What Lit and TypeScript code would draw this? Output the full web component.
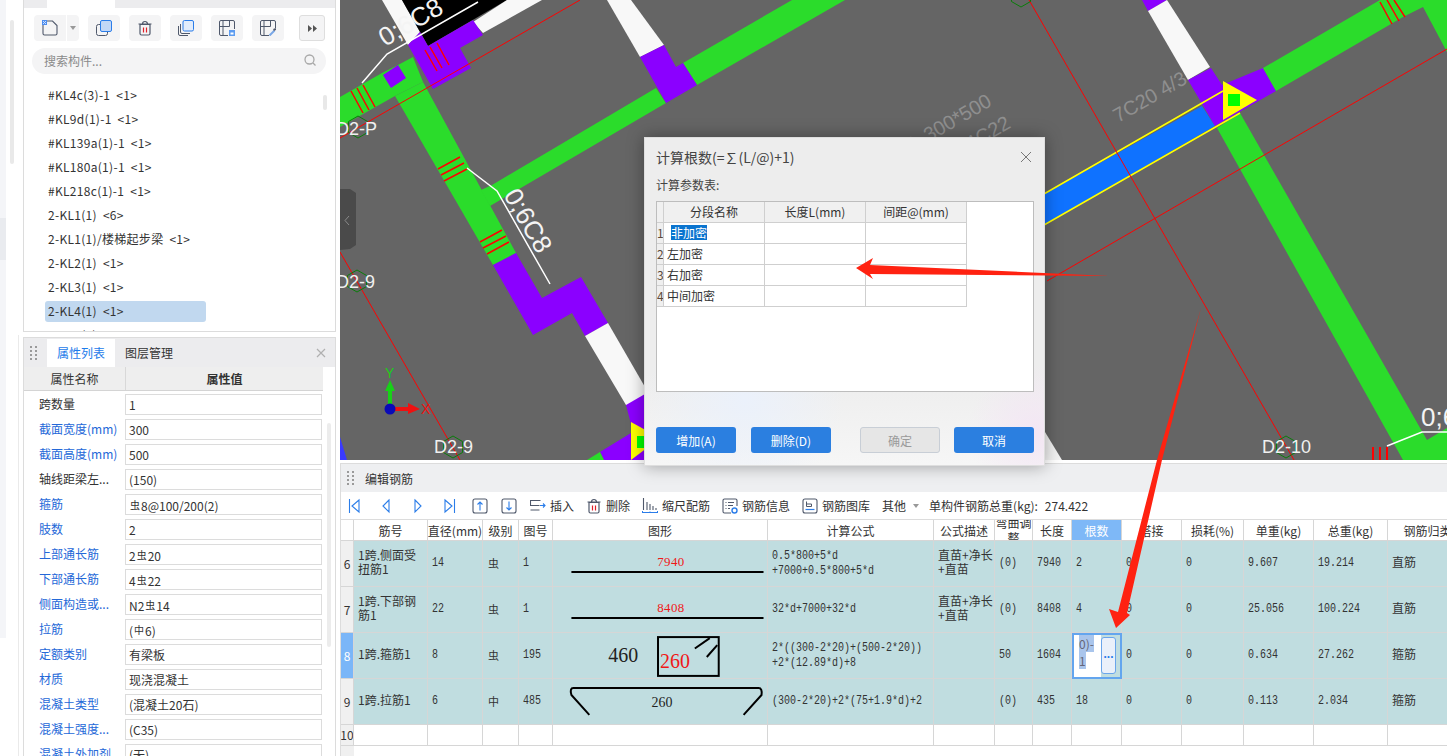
import { LitElement, css, html } from "lit";
import { customElement } from "lit/decorators.js";

const listItems = [
  "#KL4c(3)-1  <1>",
  "#KL9d(1)-1  <1>",
  "#KL139a(1)-1  <1>",
  "#KL180a(1)-1  <1>",
  "#KL218c(1)-1  <1>",
  "2-KL1(1)  <6>",
  "2-KL1(1)/楼梯起步梁  <1>",
  "2-KL2(1)  <1>",
  "2-KL3(1)  <1>",
  "2-KL4(1)  <1>",
  "2-KL5(1)  <1>",
];

// blue = label shown as a public attribute
const props: [string, string, boolean][] = [
  ["跨数量", "1", false],
  ["截面宽度(mm)", "300", true],
  ["截面高度(mm)", "500", true],
  ["轴线距梁左...", "(150)", false],
  ["箍筋", "虫8@100/200(2)", true],
  ["肢数", "2", true],
  ["上部通长筋", "2虫20", true],
  ["下部通长筋", "4虫22", true],
  ["侧面构造或...", "N2虫14", true],
  ["拉筋", "(中6)", true],
  ["定额类别", "有梁板", true],
  ["材质", "现浇混凝土", true],
  ["混凝土类型", "(混凝土20石)", true],
  ["混凝土强度...", "(C35)", true],
  ["混凝土外加剂", "(无)", true],
];

const headers = ["", "筋号", "直径(mm)", "级别", "图号", "图形", "计算公式", "公式描述", "弯曲调整", "长度", "根数", "搭接", "损耗(%)", "单重(kg)", "总重(kg)", "钢筋归类"];

const rows = [
  { no: "6", name: "1跨.侧面受扭筋1", d: "14", grade: "虫", shape: "line7940", formula: ["0.5*800+5*d", "+7000+0.5*800+5*d"], desc: "直苗+净长+直苗", bend: "(0)", len: "7940", count: "2", unit: "9.607", total: "19.214", kind: "直筋", code: "1" },
  { no: "7", name: "1跨.下部钢筋1", d: "22", grade: "虫", shape: "line8408", formula: ["32*d+7000+32*d"], desc: "直苗+净长+直苗", bend: "(0)", len: "8408", count: "4", unit: "25.056", total: "100.224", kind: "直筋", code: "1" },
  { no: "8", name: "1跨.箍筋1", d: "8", grade: "虫", shape: "stirrup", formula: ["2*((300-2*20)+(500-2*20))", "+2*(12.89*d)+8"], desc: "", bend: "50", len: "1604", count: "", unit: "0.634", total: "27.262", kind: "箍筋", code: "195" },
  { no: "9", name: "1跨.拉筋1", d: "6", grade: "中", shape: "tie", formula: ["(300-2*20)+2*(75+1.9*d)+2"], desc: "", bend: "(0)", len: "435", count: "18", unit: "0.113", total: "2.034", kind: "箍筋", code: "485" },
];

const hex = (cx: number, cy: number, r = 11) =>
  [0, 60, 120, 180, 240, 300]
    .map((a) => {
      const t = ((a + 90) * Math.PI) / 180;
      return `${cx + r * Math.cos(t)},${cy + r * Math.sin(t)}`;
    })
    .join(" ");

// the rebar grade symbols sit smaller and higher than the digits around them
const withGrade = (v: string) =>
  v.split(/([虫中](?=\d))/).map((part) =>
    part === "虫" || part === "中" ? html`<span class="sym">${part}</span>` : part
  );

const mono = (v: string) => html`<span class="mono">${v}</span>`;

const dots = html`<svg class="dots" width="7" height="14" viewBox="0 0 7 14">
  <g fill="#9a9a9a"><rect x="0" y="0" width="2" height="2"/><rect x="5" y="0" width="2" height="2"/><rect x="0" y="4" width="2" height="2"/><rect x="5" y="4" width="2" height="2"/><rect x="0" y="8" width="2" height="2"/><rect x="5" y="8" width="2" height="2"/><rect x="0" y="12" width="2" height="2"/><rect x="5" y="12" width="2" height="2"/></g>
</svg>`;

const trash = html`<svg width="16" height="16" viewBox="0 0 16 16" fill="none">
  <path d="M3 4.500h10v9a1.500 1.500 0 0 1-1.500 1.500h-7A1.500 1.500 0 0 1 3 13.500z M1.500 4h13 M5.500 4a2.500 2.500 0 0 1 5 0" stroke="#4f586b" stroke-width="1.200"/>
  <path d="M6.500 7.500v5 M9.500 7.500v5" stroke="#e0202a" stroke-width="1.200"/>
</svg>`;

const nav = (d: string) => html`<span class="nav"><svg width="12" height="16" viewBox="0 0 12 16" fill="none" stroke="#2b7de9" stroke-width="1.100"><path d=${d}/></svg></span>`;

const boxArrow = (d: string) => html`<span class="box"><svg width="16" height="16" viewBox="0 0 16 16" fill="none">
  <rect x="1" y="1" width="14" height="14" rx="2" stroke="#4f586b" stroke-width="1.100"/>
  <path d=${d} stroke="#2b7de9" stroke-width="1.100"/>
</svg></span>`;

const insertIcon = html`<svg width="16" height="16" viewBox="0 0 16 16" fill="none">
  <path d="M10.500 2.500h-10v5h9 M.5 12h9" stroke="#4f586b" stroke-width="1.100"/>
  <path d="M10 7.500h5 M13 5.500l2 2-2 2" stroke="#2b7de9" stroke-width="1.100"/>
</svg>`;

const chartIcon = html`<svg width="16" height="16" viewBox="0 0 16 16" fill="none">
  <path d="M1.500 0v12 M5 4v8 M8 6v6 M11 8v4 M14 10v2" stroke="#4f586b" stroke-width="1.100"/>
  <path d="M.5 13v2 M.5 14.500h15 M15.500 13v2 M8 13.500v1" stroke="#2b7de9" stroke-width="1"/>
</svg>`;

const infoIcon = html`<svg width="16" height="16" viewBox="0 0 16 16" fill="none">
  <path d="M15 8V2.500A1.500 1.500 0 0 0 13.500 1h-11A1.500 1.500 0 0 0 1 2.500v11A1.500 1.500 0 0 0 2.500 15H9" stroke="#4f586b" stroke-width="1.100"/>
  <path d="M3.500 4.500h1 M6 4.500h6 M3.500 7.500h1 M6 7.500h5 M3.500 10.500h1 M6 10.500h2" stroke="#4f586b" stroke-width="1"/>
  <circle cx="12.500" cy="12.500" r="2.500" stroke="#2b7de9" stroke-width="1.400"/>
</svg>`;

const libIcon = html`<svg width="16" height="16" viewBox="0 0 16 16" fill="none">
  <rect x="1" y="1" width="14" height="14" rx="2" stroke="#4f586b" stroke-width="1.100"/>
  <path d="M4.500 3.500v5h5v-2.500h-5" stroke="#4f586b" stroke-width="1"/>
  <path d="M3.500 11.500h9" stroke="#2b7de9" stroke-width="1.200"/>
</svg>`;

const shapes: Record<string, unknown> = {
  line7940: html`<svg width="215" height="45" viewBox="552.500 541 215 45">
    <text x="671" y="566" text-anchor="middle" class="fig-red">7940</text>
    <path d="M571 572h193" stroke="#000" stroke-width="2"/>
  </svg>`,
  line8408: html`<svg width="215" height="45" viewBox="552.500 587 215 45">
    <text x="671" y="612" text-anchor="middle" class="fig-red">8408</text>
    <path d="M571 618h193" stroke="#000" stroke-width="2"/>
  </svg>`,
  stirrup: html`<svg width="215" height="45" viewBox="552.500 633 215 45">
    <text x="623" y="662" text-anchor="middle" class="fig-big">460</text>
    <rect x="658" y="637" width="61" height="39" fill="none" stroke="#000" stroke-width="2"/>
    <path d="M695 648.500l15-10.500 M707 657l10.500-12" stroke="#000" stroke-width="2"/>
    <text x="675" y="668" text-anchor="middle" class="fig-big red">260</text>
  </svg>`,
  tie: html`<svg width="215" height="45" viewBox="552.500 679 215 45">
    <path d="M589 715l-18-20q-2-7 2-7h186q4 0 3 7l-18 20" fill="none" stroke="#000" stroke-width="2"/>
    <text x="662" y="707" text-anchor="middle" class="fig-mid">260</text>
  </svg>`,
};

@customElement("app-root")
export class AppRoot extends LitElement {
  renderCanvas() {
    return html`<svg class="canvas" width="1107" height="460" viewBox="340 0 1107 460">
      <rect x="340" y="0" width="1107" height="460" fill="#656565"/>

      <!-- top left junction -->
      <polygon fill="#f8f8f8" points="382,0 402,0 420,32 408,45"/>
      <polygon fill="#000" points="402,0 507,0 428,46"/>
      <polygon fill="#f8f8f8" points="473,22 507,0 542,0 483,33"/>
      <polygon fill="#8b00ff" points="408,45 420,32 428,46 473,20 483,35 460,48 471,68 433,89"/>
      <polygon fill="#2bdc2b" points="340,97 382,73 398,65 413,57 423,82 395,96 340,127"/>
      <polygon fill="#2bdc2b" points="395,96 423,82 516,253 493,265"/>
      <polygon fill="#8b00ff" points="383,75 398,65 406,78 391,88"/>
      <path d="M351 91l12 22 M357 88l12 22 M363 85l12 22 M425 50l12 21 M430 47l12 21 M437 43l12 22" stroke="#ff0000" stroke-width="1.500"/>

      <!-- branch toward the top -->
      <polygon fill="#2bdc2b" points="481,190 492,185 656,88 666,103 490,206"/>
      <polygon fill="#2bdc2b" points="683,63 792,0 845,0 697,85"/>
      <polygon fill="#f8f8f8" points="607,0 631,0 664,45 640,57"/>
      <polygon fill="#8b00ff" points="640,57 664,45 676,67 683,63 697,85 666,103"/>
      <path d="M438 169l22-12 M441 175l23-12 M444 181l23-12 M480 242l22-12 M483 248l23-12 M487 254l22-12" stroke="#ff0000" stroke-width="1.500"/>

      <!-- beam running down to the dialog -->
      <polygon fill="#8b00ff" points="493,265 516,253 542,298 581,277 608,323 585,336 572,313 533,335"/>
      <polygon fill="#f8f8f8" points="585,336 608,323 660,413 626,405"/>
      <polygon fill="#8b00ff" points="626,405 645,394 660,440 631,424"/>
      <polygon fill="#8b00ff" points="600,452 631,433 660,433 660,460 604,460"/>
      <polygon fill="#2bdc2b" points="587,460 600,452 604,460"/>
      <polygon fill="#ffff00" points="631,422 660,438 631,460"/>
      <rect x="637" y="436" width="12" height="12" fill="#00ff00"/>
      <polygon fill="#3a3aff" points="340,437 347,460 340,460"/>

      <!-- right side -->
      <polygon fill="#0f72ff" points="1030,202 1202,106 1215,126 1030,233"/>
      <polygon fill="#8b00ff" points="1142,0 1148,11 1167,0"/>
      <polygon fill="#f8f8f8" points="1148,11 1167,0 1210,67 1188,80"/>
      <polygon fill="#2bdc2b" points="1217,128 1240,113 1427,440 1447,428 1447,460 1403,460"/>
      <polygon fill="#8b00ff" points="1188,80 1211,68 1222,85 1263,68 1276,91 1215,126"/>
      <polygon fill="#2bdc2b" points="1263,68 1380,0 1447,0 1447,52 1423,7 1403,17 1276,91"/>
      <path d="M1030 202L1223 91 M1030 233L1240 113" stroke="#ffff00" stroke-width="1.500"/>
      <path d="M1380 2l12 22 M1387 0l12 21 M1394 0l11 17" stroke="#ff0000" stroke-width="1.500"/>
      <polygon fill="#ffff00" points="1223,81 1257,100 1223,120"/>
      <rect x="1228" y="94" width="12" height="12" fill="#00ff00"/>
      <path d="M1373 447v13 M1380 447v13 M1387 447v13" stroke="#ff0000" stroke-width="2"/>
      <polygon fill="#f2f2f2" points="1045,432 1062,460 1045,460"/>

      <!-- axis lines -->
      <path d="M340 138L580 0 M340 252L460 460 M1029 0L1294 460 M1447 49L1047 281" stroke="#ff0000" stroke-width="1" fill="none"/>

      <!-- leaders and labels -->
      <path d="M362 83l25-29 L478 2 M467 168l30 23 L550 284 M1387 446l35-14h25" stroke="#fff" stroke-width="1.500" fill="none"/>
      <text class="rebar" transform="translate(385 47) rotate(-30)">0;6C8</text>
      <text class="rebar" transform="translate(503 195) rotate(60)">0;6C8</text>
      <text class="rebar" x="1421" y="426">0;6C8</text>
      <text class="note" transform="translate(1118 123) rotate(-30)">7C20 4/3</text>
      <text class="note" text-anchor="end" transform="translate(993 105) rotate(-30)">L 300*500</text>
      <text class="note" text-anchor="end" transform="translate(1012 127) rotate(-30)">4C22</text>

      <g fill="none" stroke="#0a7d0a"><polygon points=${hex(358, 127)}/><polygon points=${hex(357, 281)}/><polygon points=${hex(453, 447)}/><polygon points=${hex(1286, 447)}/><polygon points=${hex(1021, -4)}/></g>
      <text class="axis" x="336" y="135">D2-P</text>
      <text class="axis" x="336" y="288">D2-9</text>
      <text class="axis" x="434" y="453">D2-9</text>
      <text class="axis" x="1262" y="453">D2-10</text>

      <!-- coordinate cross -->
      <rect x="388" y="391" width="4" height="13" fill="#18d018"/>
      <polygon fill="#18d018" points="385,391 390,380 395,391"/>
      <rect x="395" y="407" width="14" height="4" fill="#ee1111"/>
      <polygon fill="#ee1111" points="408,403 420,409 408,414"/>
      <circle cx="390" cy="409" r="5.500" fill="#0a0ab8"/>
      <text class="cross" x="385" y="378" fill="#18d018">Y</text>
      <text class="cross" x="421" y="414" fill="#ee1111">X</text>

      <!-- collapse handle -->
      <polygon fill="#4a4a4a" points="340,189 350,189 356,193 356,245 350,249 340,250"/>
      <path d="M349 216l-4 4.500 4 4.500" fill="none" stroke="#8a8a8a"/>
    </svg>`;
  }

  renderPanelTools() {
    return html`<div class="tools">
      <div class="split">
        <span class="tool-btn main"><svg width="16" height="16" viewBox="0 0 16 16" fill="none">
          <path d="M10.500 1H2.500A1.500 1.500 0 0 0 1 2.500v11A1.500 1.500 0 0 0 2.500 15h11a1.500 1.500 0 0 0 1.500-1.500V5.500z" stroke="#4f586b" stroke-width="1.100"/>
          <rect x="0" y="0" width="5" height="5" fill="#4d8df0"/>
          <path d="M1 1h1v1H1z M3 1h1v1H3z M2 2h1v1H2z M1 3h1v1H1z M3 3h1v1H3z" fill="#cfe0fb"/>
        </svg></span>
        <span class="tool-btn drop"><span class="caret"></span></span>
      </div>
      <span class="tool-btn"><svg width="16" height="16" viewBox="0 0 16 16" fill="none">
        <rect x=".5" y="4.500" width="11" height="11" rx="2" stroke="#4f586b"/>
        <rect x="4.500" y=".5" width="11" height="11" rx="1.500" fill="#c2d7f6" stroke="#2b7de9"/>
      </svg></span>
      <span class="tool-btn">${trash}</span>
      <span class="tool-btn"><svg width="16" height="16" viewBox="0 0 16 16" fill="none">
        <path d="M.5 6v8a1.500 1.500 0 0 0 1.500 1.500h8 M2.500 4v8a1.500 1.500 0 0 0 1.500 1.500h8" stroke="#4f586b"/>
        <rect x="5" y=".5" width="10.500" height="10.500" rx="1.500" fill="#e1ecfb" stroke="#2b7de9"/>
      </svg></span>
      <span class="tool-btn"><svg width="16" height="16" viewBox="0 0 16 16" fill="none">
        <path d="M9 15.500H2A1.500 1.500 0 0 1 .5 14V2A1.500 1.500 0 0 1 2 .5h12A1.500 1.500 0 0 1 15.500 2v7" stroke="#4f586b"/>
        <path d="M.5 6.500h10 M4 .5v6 M10.500 .5v6 M4 6.500v9" stroke="#4f586b"/>
        <rect x="10" y="10" width="6" height="6" fill="#5d9cf0"/><rect x="11.500" y="12.500" width="3" height="2" fill="#fff"/>
      </svg></span>
      <span class="tool-btn"><svg width="16" height="16" viewBox="0 0 16 16" fill="none">
        <path d="M9 15.500H2A1.500 1.500 0 0 1 .5 14V2A1.500 1.500 0 0 1 2 .5h12A1.500 1.500 0 0 1 15.500 2v6" stroke="#4f586b"/>
        <path d="M.5 6.500h10 M4 .5v6 M10.500 .5v6 M4 6.500v9" stroke="#4f586b"/>
        <path d="M9.500 15.500l5-5" stroke="#7aa7e6" stroke-width="2"/><path d="M13.500 10l2.500-1" stroke="#4f586b" stroke-width="2"/>
      </svg></span>
      <span class="more"><svg width="9" height="7" viewBox="0 0 9 7" fill="#555"><path d="M0 0l4 3.500-4 3.500z M5 0l4 3.500-4 3.500z"/></svg></span>
    </div>`;
  }

  renderGrid() {
    return html`<div class="grid">
      <div class="row head">
        ${headers.map(
          (h) => html`<div class="cell ${h === "根数" ? "picked" : ""} ${h === "弯曲调整" ? "narrow" : ""}"><span>${h}</span></div>`
        )}
      </div>
      ${rows.map(
        (r) => html`<div class="row data">
          <div class="cell no ${r.no === "8" ? "current" : ""}">${r.no}</div>
          <div class="cell txt">${r.name}</div>
          <div class="cell">${mono(r.d)}</div>
          <div class="cell grade">${r.grade}</div>
          <div class="cell">${mono(r.code)}</div>
          <div class="cell fig">${shapes[r.shape]}</div>
          <div class="cell">
            <span class="mono">${r.formula.map((l) => html`<div>${l}</div>`)}</span>
          </div>
          <div class="cell txt">${r.desc}</div>
          <div class="cell">${mono(r.bend)}</div>
          <div class="cell">${mono(r.len)}</div>
          ${r.no === "8"
            ? html`<div class="cell editing">
                <div class="edit-text"><span class="sel">0)-</span><span class="sel">1</span></div>
                <div class="edit-btn">...</div>
              </div>`
            : html`<div class="cell">${mono(r.count)}</div>`}
          <div class="cell">${mono("0")}</div>
          <div class="cell">${mono("0")}</div>
          <div class="cell">${mono(r.unit)}</div>
          <div class="cell">${mono(r.total)}</div>
          <div class="cell txt">${r.kind}</div>
        </div>`
      )}
      <div class="row blank">
        <div class="cell no">10</div>
        ${headers.slice(1).map(() => html`<div class="cell"></div>`)}
      </div>
      <div class="grid-rest"><div class="rest-head"></div></div>
    </div>`;
  }

  renderDialog() {
    const segs = ["非加密", "左加密", "右加密", "中间加密"];
    return html`<div class="dialog">
      <div class="dlg-title">
        <span>计算根数(=∑(L/@)+1)</span>
        <svg width="12" height="12" viewBox="0 0 12 12" stroke="#777" fill="none"><path d="M1 1l10 10 M11 1L1 11"/></svg>
      </div>
      <div class="dlg-sub">计算参数表:</div>
      <div class="dlg-table">
        <div class="dlg-row dlg-head">
          <div></div><div>分段名称</div><div>长度L(mm)</div><div>间距@(mm)</div>
        </div>
        ${segs.map(
          (s, i) => html`<div class="dlg-row">
            <div class="dlg-no">${i + 1}</div>
            <div class="dlg-seg">${i === 0 ? html`<span class="dlg-sel">${s}</span>` : s}</div>
            <div></div><div></div>
          </div>`
        )}
      </div>
      <div class="dlg-btns">
        <button class="btn">增加(A)</button>
        <button class="btn second">删除(D)</button>
        <button class="btn off">确定</button>
        <button class="btn last">取消</button>
      </div>
    </div>`;
  }

  render() {
    return html`<div class="page">
      <div class="rail">
        <div class="strip">
          <div class="strip-a"></div><div class="strip-b"></div><div class="strip-c"></div>
        </div>
        <div class="gutter">
          <div class="gutter-top"><div class="thumb"></div></div>
          <div class="gutter-low"></div>
        </div>
      </div>

      <div class="side">
        <section class="panel list-panel">
          <div class="stub"><div class="stub-tab"></div></div>
          ${this.renderPanelTools()}
          <div class="search">
            <span>搜索构件...</span>
            <svg width="14" height="14" viewBox="0 0 14 14" fill="none" stroke="#a8a8a8" stroke-width="1.300"><circle cx="6.500" cy="6.500" r="4.500"/><path d="M10 10l2.500 2.500"/></svg>
          </div>
          <div class="items">
            ${listItems.map((t, i) => html`<div class="item ${i === 9 ? "on" : ""}">${t}</div>`)}
          </div>
          <div class="list-thumb"></div>
        </section>

        <section class="panel prop-panel">
          <div class="prop-tabs">
            ${dots}
            <span class="prop-tab active">属性列表</span>
            <span class="prop-tab">图层管理</span>
            <svg class="prop-x" width="10" height="10" viewBox="0 0 10 10" stroke="#b0b0b0" stroke-width="1.200" fill="none"><path d="M1 1l8 8 M9 1L1 9"/></svg>
          </div>
          <div class="prop-head"><div>属性名称</div><div class="strong">属性值</div></div>
          ${props.map(
            ([k, v, blue]) => html`<div class="prop-row">
              <div class="prop-key ${blue ? "blue" : ""}">${k}</div>
              <div class="prop-val">${withGrade(v)}</div>
            </div>`
          )}
          <div class="prop-thumb"></div>
        </section>
      </div>

      <div class="main">
        ${this.renderCanvas()}
        <section class="rebar-panel">
          <div class="rebar-title">${dots}<span>编辑钢筋</span></div>
          <div class="bar">
            ${nav("M1.500 1v14 M11 2L4 8l7 6z")}
            ${nav("M9 2L3 8l6 6z")}
            ${nav("M3 2l6 6-6 6z")}
            ${nav("M1 2l7 6-7 6z M10.500 1v14")}
            ${boxArrow("M8 12.500V4 M5.500 6.500L8 4l2.500 2.500")}
            ${boxArrow("M8 3.500V12 M5.500 9.500L8 12l2.500-2.500")}
            <span class="tool">${insertIcon}插入</span>
            <span class="tool">${trash}删除</span>
            <span class="tool">${chartIcon}缩尺配筋</span>
            <span class="tool">${infoIcon}钢筋信息</span>
            <span class="tool">${libIcon}钢筋图库</span>
            <span class="tool other">其他<span class="caret"></span></span>
            <span>单构件钢筋总重(kg):</span><span class="weight">274.422</span>
          </div>
          ${this.renderGrid()}
        </section>
      </div>

      ${this.renderDialog()}

      <svg class="arrows" width="1447" height="756" viewBox="0 0 1447 756">
        <polygon fill="#ff2211" points="856,268 873,258 870,265 1110,276 870,274 873,279"/>
        <polygon fill="#ff2211" points="1201,308 1162,460 1127,613 1130,615 1116,628 1109,609 1118,612 1157,460"/>
      </svg>
    </div>`;
  }

  static styles = css`
    :host {
      display: block;
      font-family: "Noto Sans CJK SC", "Noto Sans", sans-serif;
      font-size: 12px;
      color: #333;
    }

    .page {
      position: relative;
      display: flex;
      width: 1447px;
      height: 756px;
      overflow: hidden;
      background: #fff;
    }

    /* far left rail */
    .rail {
      display: flex;
      flex: 0 0 23px;
    }
    .strip {
      display: flex;
      flex-direction: column;
      width: 6px;
    }
    .strip-a {
      height: 218px;
      background: #f4f5f8;
    }
    .strip-b {
      height: 42px;
      background: #e9ebef;
    }
    .strip-c {
      height: 378px;
      background: #f4f5f8;
    }
    .gutter {
      display: flex;
      flex-direction: column;
      width: 13px;
    }
    .gutter-top {
      height: 335px;
      padding: 20px 0 0 4px;
      box-sizing: border-box;
    }
    .thumb {
      width: 4px;
      height: 144px;
      background: #e9e9e9;
      border-radius: 2px;
    }
    .gutter-low {
      flex: 1;
      border-right: 1px solid #eaeaea;
    }

    /* left column */
    .side {
      display: flex;
      flex-direction: column;
      flex: 0 0 317px;
      gap: 5px;
    }
    .panel {
      position: relative;
      width: 313px;
      box-sizing: border-box;
      border: 1px solid #dcdcdc;
      overflow: hidden;
    }
    .list-panel {
      flex: none;
      height: 332px;
      border-top: 0;
    }
    .stub {
      height: 8px;
      background: #ececee;
    }
    .stub-tab {
      width: 68px;
      height: 8px;
      margin-left: 23px;
      background: #fff;
    }
    .tools {
      display: flex;
      height: 26px;
      margin: 7px 0 0 10px;
      gap: 9px;
    }
    .split {
      display: flex;
      gap: 1px;
    }
    .tool-btn {
      display: flex;
      align-items: center;
      justify-content: center;
      width: 32px;
      height: 26px;
      background: #f4f4f5;
      border-radius: 4px;
    }
    .tool-btn.main {
      border-radius: 4px 0 0 4px;
    }
    .tool-btn.drop {
      width: 12px;
      border-radius: 0 4px 4px 0;
    }
    .caret {
      width: 0;
      height: 0;
      border: 3px solid transparent;
      border-top: 4px solid #999;
      border-bottom: 0;
    }
    .more {
      display: flex;
      align-items: center;
      justify-content: center;
      width: 26px;
      height: 26px;
      box-sizing: border-box;
      margin-left: 6px;
      background: #f4f4f5;
      border: 1px solid #dedede;
      border-radius: 3px;
    }
    .search {
      display: flex;
      align-items: center;
      justify-content: space-between;
      height: 26px;
      margin: 7px 9px 0 8px;
      padding: 0 9px 2px 12px;
      box-sizing: border-box;
      background: #f4f4f5;
      border-radius: 13px;
      color: #8a8a8a;
    }
    .items {
      margin: 11px 0 0 21px;
    }
    .item {
      width: 161px;
      height: 21px;
      box-sizing: border-box;
      margin-bottom: 3px;
      padding-left: 3px;
      line-height: 20px;
      letter-spacing: 0.3px;
      white-space: pre;
      border-radius: 3px;
    }
    .item.on {
      background: #c1d8ef;
    }
    .list-thumb {
      position: absolute;
      top: 95px;
      left: 299px;
      width: 4px;
      height: 15px;
      background: #e8e8e8;
      border-radius: 2px;
    }

    .prop-panel {
      flex: 1;
      border-bottom: 0;
    }
    .prop-tabs {
      display: flex;
      align-items: center;
      height: 29px;
      background: #ececee;
    }
    .dots {
      flex: none;
      margin-left: 6px;
    }
    .prop-tab {
      display: flex;
      align-items: center;
      height: 28px;
      margin-left: 10px;
    }
    .prop-tab.active {
      justify-content: center;
      width: 68px;
      margin: 0;
      margin-left: 10px;
      background: #fff;
      color: #1d7bea;
    }
    .prop-x {
      margin-left: auto;
      margin-right: 9px;
    }
    .prop-head {
      display: grid;
      grid-template-columns: 101px 198px;
      width: 299px;
      height: 24px;
      line-height: 23px;
      text-align: center;
      background: #eeeeee;
      border-bottom: 1px solid #d4d4d4;
      box-sizing: border-box;
    }
    .prop-head div + div {
      border-left: 1px solid #d8d8d8;
    }
    .strong {
      font-weight: 700;
    }
    .prop-row {
      display: grid;
      grid-template-columns: 101px 197px;
      height: 25px;
      padding-top: 3px;
      box-sizing: border-box;
      line-height: 20px;
    }
    .prop-key {
      padding-left: 15px;
      white-space: nowrap;
      overflow: hidden;
    }
    .prop-key.blue {
      color: #2468d8;
    }
    .prop-val {
      height: 21px;
      box-sizing: border-box;
      padding-left: 3px;
      border: 1px solid #dcdcdc;
      line-height: 19px;
      white-space: nowrap;
    }
    .sym {
      margin: 0 1px;
      font-size: 10px;
      vertical-align: 2px;
    }
    .prop-thumb {
      position: absolute;
      top: 85px;
      left: 303px;
      width: 4px;
      height: 224px;
      background: #ececec;
      border-radius: 2px;
    }

    /* canvas + rebar editor */
    .main {
      flex: 1;
      min-width: 0;
      display: flex;
      flex-direction: column;
    }
    .canvas {
      display: block;
      flex: none;
    }
    .rebar {
      font-family: "Liberation Sans", sans-serif;
      font-size: 26px;
      fill: #f4f4f4;
    }
    .note {
      font-family: "Liberation Sans", sans-serif;
      font-size: 20px;
      fill: #8f8f8f;
    }
    .axis {
      font-family: "Liberation Sans", sans-serif;
      font-size: 18px;
      fill: #f0f0f0;
    }
    .cross {
      font-family: "Liberation Sans", sans-serif;
      font-size: 14px;
    }
    .rebar-panel {
      flex: 1;
      margin-top: 3px;
      border-top: 1px solid #dcdcdc;
      border-left: 1px solid #dcdcdc;
      overflow: hidden;
    }
    .rebar-title {
      display: flex;
      align-items: center;
      gap: 11px;
      height: 28px;
      background: #eeeff1;
    }
    .rebar-title .dots {
      margin-left: 6px;
    }
    .bar {
      display: flex;
      align-items: center;
      height: 28px;
      box-sizing: border-box;
      padding-left: 3px;
      border-bottom: 1px solid #dcdcdc;
      white-space: nowrap;
    }
    .weight {
      margin-left: 7px;
    }
    .nav {
      display: flex;
      justify-content: center;
      width: 20px;
      margin-right: 12px;
    }
    .box {
      display: flex;
      width: 16px;
      margin-right: 13px;
    }
    .tool {
      display: flex;
      align-items: center;
      gap: 4px;
      margin-right: 12px;
    }
    .tool.other {
      gap: 7px;
      margin-right: 10px;
    }

    .grid {
      width: 1127px;
    }
    .row {
      display: grid;
      grid-template-columns: 13px 74px 55px 36px 34px 215px 166px 61px 38px 39px 50px 60px 62px 70px 74px 80px;
    }
    .row.head {
      height: 21px;
    }
    .row.data {
      height: 46px;
      background: #c0dde0;
    }
    .row.blank {
      height: 21px;
    }
    .cell {
      display: flex;
      align-items: center;
      box-sizing: border-box;
      min-width: 0;
      padding: 0 4px;
      border-right: 1px solid #d6d6d6;
      border-bottom: 1px solid #d6d6d6;
      overflow: hidden;
      line-height: 14px;
    }
    .mono {
      display: inline-block;
      font-family: "Liberation Mono", monospace;
      font-size: 10px;
      line-height: 11.670px;
      white-space: nowrap;
      transform: scaleY(1.2);
    }
    .row.head .cell {
      justify-content: center;
      padding: 0;
      line-height: 15px;
      white-space: nowrap;
      text-align: center;
    }
    .row.head .cell.narrow {
      white-space: normal;
    }
    .row.head .cell.narrow span {
      display: block;
      flex: none;
      width: 36px;
    }
    .row.head .cell.picked {
      background: #7eb8f7;
      color: #fff;
    }
    .cell.no {
      justify-content: center;
      padding: 0;
      background: #f0f0f0;
    }
    .row.blank .cell {
      padding: 0;
    }
    .cell.no.current {
      background: #7ab6f8;
      color: #fff;
    }
    .cell.txt {
      padding: 0 0 4px 4px;
    }
    .cell.grade {
      padding: 0 0 2px 5px;
      font-size: 11px;
    }
    .cell.fig {
      padding: 0;
    }
    .cell.fig svg {
      display: block;
    }
    .fig-red {
      font-family: "Liberation Serif", serif;
      font-size: 13px;
      letter-spacing: 0.4px;
      fill: #f01818;
    }
    .fig-big {
      font-family: "Liberation Serif", serif;
      font-size: 20px;
      fill: #222;
    }
    .fig-big.red {
      fill: #f01818;
    }
    .fig-mid {
      font-family: "Liberation Serif", serif;
      font-size: 14px;
      fill: #222;
    }
    .cell.editing {
      align-items: stretch;
      padding: 0;
      border: 2px solid #63a5ee;
    }
    .edit-text {
      display: flex;
      flex-direction: column;
      align-items: flex-start;
      width: 27px;
      box-sizing: border-box;
      padding-left: 5px;
      background: #fff;
      line-height: 17px;
      color: #667;
    }
    .sel {
      background: #a9c5ec;
    }
    .edit-btn {
      display: flex;
      align-items: center;
      justify-content: center;
      width: 15px;
      margin: 2px 0 3px 0;
      background: #eaf0fa;
      border: 1px solid #6aa5ea;
      border-radius: 3px;
      color: #2b7de9;
      font-family: "Liberation Sans", sans-serif;
      font-weight: 700;
      line-height: 8px;
      padding-bottom: 4px;
      box-sizing: border-box;
    }
    .grid-rest {
      height: 20px;
    }
    .rest-head {
      width: 13px;
      height: 100%;
      background: #f0f0f0;
    }

    /* dialog */
    .dialog {
      position: absolute;
      left: 644px;
      top: 137px;
      display: flex;
      flex-direction: column;
      width: 401px;
      height: 329px;
      box-sizing: border-box;
      padding: 0 10px 12px 11px;
      background:
        radial-gradient(circle at 98% 90%, #f3e6f4 0, transparent 14%),
        radial-gradient(circle at 25% 80%, #ebf1fb 0, transparent 25%),
        linear-gradient(#ededed 0, #ededed 72%, #f6f6f6 100%);
      border: 1px solid #dedede;
      box-shadow: 0 0 16px rgba(0, 0, 0, 0.35);
    }
    .dlg-title {
      display: flex;
      align-items: center;
      justify-content: space-between;
      height: 37px;
      padding: 0 2px 0 0;
      font-size: 14px;
      color: #444;
    }
    .dlg-sub {
      height: 25px;
      line-height: 18px;
      margin-top: 1px;
      color: #444;
    }
    .dlg-table {
      width: 378px;
      height: 191px;
      box-sizing: border-box;
      background: #fff;
      border: 1px solid #bdbdbd;
    }
    .dlg-row {
      display: grid;
      grid-template-columns: 7px 101px 101px 101px;
      height: 21px;
      width: 310px;
      line-height: 20px;
    }
    .dlg-row > div {
      box-sizing: border-box;
      border-right: 1px solid #cfcfcf;
      border-bottom: 1px solid #cfcfcf;
      overflow: hidden;
      white-space: nowrap;
    }
    .dlg-head > div {
      background: #f0f0f0;
      text-align: center;
    }
    .dlg-no {
      background: #efefef;
      text-align: center;
      color: #5b4a3a;
    }
    .dlg-seg {
      padding-left: 3px;
    }
    .dlg-sel {
      display: inline-block;
      margin-left: 4px;
      height: 15px;
      line-height: 15px;
      background: #0a74cf;
      color: #fff;
    }
    .dlg-btns {
      display: flex;
      margin-top: auto;
    }
    .btn {
      width: 80px;
      height: 26px;
      padding: 0;
      font: inherit;
      color: #fff;
      background: #2b7fe0;
      border: 0;
      border-radius: 3px;
    }
    .btn.second {
      margin-left: 15px;
    }
    .btn.off {
      margin-left: 29px;
      color: #9a9a9a;
      background: #e6e6e6;
      border: 1px solid #c8ced6;
    }
    .btn.last {
      margin-left: 14px;
    }

    .arrows {
      position: absolute;
      left: 0;
      top: 0;
      pointer-events: none;
    }
  `;
}

declare global {
  interface HTMLElementTagNameMap {
    "app-root": AppRoot;
  }
}
